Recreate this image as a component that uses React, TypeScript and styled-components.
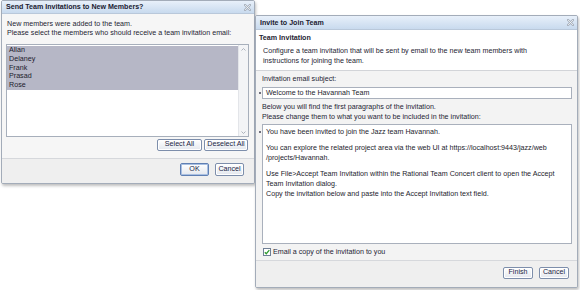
import React from 'react';
import styled, { createGlobalStyle } from 'styled-components';

const Global = createGlobalStyle`
  html, body { margin: 0; padding: 0; background: #ffffff; }
  body {
    font-family: "Liberation Sans", Arial, sans-serif;
    font-size: 7.15px;
    color: #1e1e33;
  }
  #root { width: 580px; height: 290px; overflow: hidden; }
`;

const Page = styled.div`
  display: flex;
  align-items: flex-start;
  padding-left: 1px;
`;

const Dialog = styled.div<{ $w: number; $top: number }>`
  box-sizing: border-box;
  width: ${(p) => p.$w}px;
  margin-top: ${(p) => p.$top}px;
  border: 1px solid #a3acb9;
  border-radius: 2px;
  background: #f2f2f2;
  box-shadow: 1px 2px 3px rgba(0, 0, 0, 0.25);
  display: flex;
  flex-direction: column;
  overflow: hidden;
`;

const TitleBar = styled.div<{ $h: number }>`
  height: ${(p) => p.$h}px;
  border-bottom: 1px solid #b9c8da;
  background: linear-gradient(#e8f0fa, #c8daee);
  display: flex;
  align-items: center;
  justify-content: space-between;
  padding: 0 3px 0 4px;
`;

const Title = styled.span`
  font-weight: bold;
  font-size: 7.1px;
  color: #1a1a30;
`;

const CloseIcon = () => (
  <svg width="7" height="7" viewBox="0 0 7 7">
    <path d="M1 1L6 6M6 1L1 6" stroke="#a8b0bc" strokeWidth="2.2" strokeLinecap="square" />
    <path d="M1 1L6 6M6 1L1 6" stroke="#f4f6f9" strokeWidth="0.8" />
  </svg>
);

/* ---------- left dialog ---------- */

const LeftBody = styled.div`
  background: #f6f6f6;
  padding: 6px 5px 7px 4px;
  display: flex;
  flex-direction: column;
`;

const Intro = styled.div`
  line-height: 9px;
  padding-left: 1px;
`;

const ListBox = styled.div`
  margin-top: 6px;
  height: 93px;
  box-sizing: border-box;
  border: 1px solid #a7afbb;
  background: #ffffff;
  display: flex;
`;

const ListRows = styled.div`
  flex: 1;
  padding-top: 1px;
`;

const ListRow = styled.div<{ $selected: boolean }>`
  height: 8.8px;
  line-height: 8.8px;
  padding-left: 2px;
  background: ${(p) => (p.$selected ? '#b6b7c6' : 'transparent')};
  color: #1c1c2c;
`;

const ScrollBar = styled.div`
  width: 9px;
  background: #f3f4f6;
  border-left: 1px solid #e3e5e9;
  display: flex;
  flex-direction: column;
  justify-content: space-between;
  align-items: center;
  padding: 3px 0 2px;
`;

const ButtonRow = styled.div<{ $gap: number; $pr: number }>`
  display: flex;
  justify-content: flex-end;
  gap: ${(p) => p.$gap}px;
  padding-right: ${(p) => p.$pr}px;
`;

const SelectRow = styled(ButtonRow)`
  margin-top: 2px;
`;

const Footer = styled.div<{ $pt: number; $pb: number }>`
  border-top: 1px solid #d6d8dc;
  background: #efefef;
  padding: ${(p) => p.$pt}px 0 ${(p) => p.$pb}px;
`;

const Button = styled.button<{ $w: number; $h?: number; $default?: boolean }>`
  box-sizing: border-box;
  width: ${(p) => p.$w}px;
  height: ${(p) => p.$h ?? 12}px;
  padding: 0;
  margin: 0;
  font-family: "Liberation Sans", Arial, sans-serif;
  font-size: 7.15px;
  line-height: 1;
  color: #1a2444;
  border: 1px solid ${(p) => (p.$default ? '#5f7fb3' : '#7d8eab')};
  box-shadow: ${(p) => (p.$default ? 'inset 0 0 0 1px #a9c0e2' : 'inset 0 0 0 1px #ffffff')};
  border-radius: 2px;
  background: linear-gradient(#ffffff, #e3e7ee);
  display: inline-flex;
  align-items: center;
  justify-content: center;
`;

/* ---------- right dialog ---------- */

const Header = styled.div`
  background: #ffffff;
  padding: 3px 3px 4px 3px;
  border-bottom: 1px solid #d2d4d8;
  line-height: 10px;
`;

const Heading = styled.div`
  font-weight: bold;
  margin-bottom: 3px;
`;

const Description = styled.div`
  padding-left: 4px;
`;

const Body = styled.div`
  background: #f3f3f3;
  padding: 3px 5px 3px 2px;
  display: flex;
  flex-direction: column;
  line-height: 10px;
`;

const Label = styled.div<{ $mt?: number }>`
  padding-left: 4px;
  margin-top: ${(p) => p.$mt ?? 0}px;
`;

const FieldRow = styled.div<{ $mt: number }>`
  display: flex;
  align-items: flex-start;
  margin-top: ${(p) => p.$mt}px;
`;

const Marker = styled.div<{ $top: number }>`
  width: 4px;
  flex: none;
  display: flex;
  justify-content: center;
  padding-top: ${(p) => p.$top}px;
  &::after {
    content: '';
    width: 1.5px;
    height: 1.5px;
    background: #555566;
    border-radius: 50%;
  }
`;

const TextBox = styled.div<{ $h: number }>`
  flex: 1;
  box-sizing: border-box;
  height: ${(p) => p.$h}px;
  border: 1px solid #a9b0bc;
  background: #ffffff;
  padding: 2px 3px;
  line-height: 10px;
  color: #1c1c2c;
  white-space: nowrap;
  overflow: hidden;
`;

const InputBox = styled(TextBox)`
  padding: 0 3px;
  display: flex;
  align-items: center;
`;

const Para = styled.div`
  & + & {
    margin-top: 6px;
  }
`;

const CheckRow = styled.label`
  display: flex;
  align-items: center;
  gap: 2px;
  margin-top: 3px;
  padding-left: 5px;
  height: 10px;
`;

const CheckBox = () => (
  <svg width="8" height="8" viewBox="0 0 8 8">
    <rect x="0.5" y="0.5" width="7" height="7" fill="#ffffff" stroke="#6f7f96" />
    <path d="M1.8 4.2L3.3 5.7L6.3 2.2" fill="none" stroke="#2e9a2e" strokeWidth="1.3" />
  </svg>
);

const Chevron = ({ up }: { up: boolean }) => (
  <svg width="5" height="3" viewBox="0 0 5 3">
    <path d={up ? 'M0.5 2.5L2.5 0.5L4.5 2.5' : 'M0.5 0.5L2.5 2.5L4.5 0.5'} fill="none" stroke="#a5abb5" strokeWidth="0.9" />
  </svg>
);

const members = ['Allan', 'Delaney', 'Frank', 'Prasad', 'Rose'];

export default function App() {
  return (
    <>
      <Global />
      <Page>
        <Dialog $w={254} $top={0}>
          <TitleBar $h={12}>
            <Title>Send Team Invitations to New Members?</Title>
            <CloseIcon />
          </TitleBar>
          <LeftBody>
            <Intro>
              New members were added to the team.
              <br />
              Please select the members who should receive a team invitation email:
            </Intro>
            <ListBox>
              <ListRows>
                {members.map((m) => (
                  <ListRow key={m} $selected>
                    {m}
                  </ListRow>
                ))}
              </ListRows>
              <ScrollBar>
                <Chevron up />
                <Chevron up={false} />
              </ScrollBar>
            </ListBox>
            <SelectRow $gap={2} $pr={1}>
              <Button $w={45}>Select All</Button>
              <Button $w={44}>Deselect All</Button>
            </SelectRow>
          </LeftBody>
          <Footer $pt={4} $pb={7}>
            <ButtonRow $gap={6} $pr={10}>
              <Button $w={29} $h={13} $default>
                OK
              </Button>
              <Button $w={29} $h={13}>
                Cancel
              </Button>
            </ButtonRow>
          </Footer>
        </Dialog>

        <Dialog $w={323} $top={15}>
          <TitleBar $h={13}>
            <Title>Invite to Join Team</Title>
            <CloseIcon />
          </TitleBar>
          <Header>
            <Heading>Team Invitation</Heading>
            <Description>
              Configure a team invitation that will be sent by email to the new team members with
              <br />
              instructions for joining the team.
            </Description>
          </Header>
          <Body>
            <Label>Invitation email subject:</Label>
            <FieldRow $mt={3}>
              <Marker $top={5} />
              <InputBox $h={12}>Welcome to the Havannah Team</InputBox>
            </FieldRow>
            <Label $mt={3}>
              Below you will find the first paragraphs of the invitation.
              <br />
              Please change them to what you want to be included in the invitation:
            </Label>
            <FieldRow $mt={2}>
              <Marker $top={7} />
              <TextBox $h={120}>
                <Para>You have been invited to join the Jazz team Havannah.</Para>
                <Para>
                  You can explore the related project area via the web UI at https://localhost:9443/jazz/web
                  <br />
                  /projects/Havannah.
                </Para>
                <Para>
                  Use File&gt;Accept Team Invitation within the Rational Team Concert client to open the Accept
                  <br />
                  Team Invitation dialog.
                  <br />
                  Copy the invitation below and paste into the Accept Invitation text field.
                </Para>
              </TextBox>
            </FieldRow>
            <CheckRow>
              <CheckBox />
              <span>Email a copy of the invitation to you</span>
            </CheckRow>
          </Body>
          <Footer $pt={6} $pb={8}>
            <ButtonRow $gap={6} $pr={8}>
              <Button $w={30}>Finish</Button>
              <Button $w={30}>Cancel</Button>
            </ButtonRow>
          </Footer>
        </Dialog>
      </Page>
    </>
  );
}
